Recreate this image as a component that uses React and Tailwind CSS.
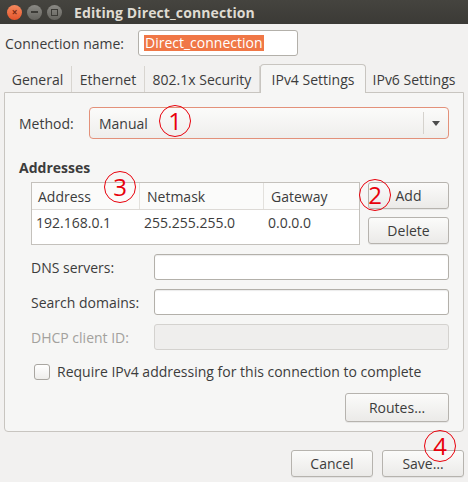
import React from 'react';

const font = { fontFamily: '"Open Sans", "DejaVu Sans", sans-serif' };

// --- red annotation circle drawn over the dialog ---
const Mark = ({ n, className }) => (
  <div className={`absolute w-[32px] h-[32px] rounded-full border-[1.5px] border-[#e8000b] flex items-center justify-center text-[#e8000b] text-[24px] leading-none pointer-events-none ${className}`}>
    {n}
  </div>
);

const Button = ({ children, className = '' }) => (
  <div className={`flex items-center justify-center h-[27px] rounded-[3px] border border-[#b6b3ae] bg-gradient-to-b from-[#fbfbfa] to-[#ebeae8] text-[#3c3c3c] text-[14px] shadow-[0_1px_0_rgba(0,0,0,0.06)] ${className}`}>
    {children}
  </div>
);

const Field = ({ disabled = false }) => (
  <div className={`flex-1 h-[26px] rounded-[3px] border ${disabled ? 'border-[#d4d2cf] bg-[#efeeed]' : 'border-[#b3b0aa] bg-white shadow-[inset_0_1px_1px_rgba(0,0,0,0.08)]'}`} />
);

const Tab = ({ label, active = false, className = '' }) => (
  <div
    className={`flex items-center justify-center text-[14px] ${active
      ? 'h-[29px] bg-[#f6f6f5] border border-b-0 border-[#c8c5c0] rounded-t-[4px] text-[#3c3c3c] -mb-px z-10'
      : 'h-[26px] border-r border-[#d8d5d0] text-[#3c3c3c]'} ${className}`}
  >
    {label}
  </div>
);

export default function App() {
  return (
    <div style={font} className="w-[468px] h-[482px] bg-[#f2f1f0] flex flex-col relative overflow-hidden text-[#3c3c3c]">
      {/* title bar */}
      <div className="h-[24px] bg-gradient-to-b from-[#45443f] to-[#3b3a36] flex items-center pl-[7px]">
        <div className="flex gap-[5px]">
          <div className="w-[15px] h-[15px] rounded-full bg-gradient-to-b from-[#f58a5e] to-[#e4532a] flex items-center justify-center text-[#7a2a14] text-[10px] font-bold leading-none">×</div>
          <div className="w-[15px] h-[15px] rounded-full bg-gradient-to-b from-[#8b8a85] to-[#64635e] flex items-center justify-center">
            <div className="w-[7px] h-[2px] bg-[#3c3b37]" />
          </div>
          <div className="w-[15px] h-[15px] rounded-full bg-gradient-to-b from-[#8b8a85] to-[#64635e] flex items-center justify-center">
            <div className="w-[7px] h-[7px] border-[1.5px] border-[#3c3b37]" />
          </div>
        </div>
        <div className="ml-[12px] text-[#dfdbd2] text-[14px] font-bold tracking-[0.1px]">Editing Direct_connection</div>
      </div>

      {/* connection name */}
      <div className="flex items-center mt-[6px] px-[5px]">
        <div className="w-[133px] text-[14px]">Connection name:</div>
        <div className="w-[160px] h-[26px] rounded-[3px] border border-[#b3b0aa] bg-white flex items-center px-[5px]">
          <span className="bg-[#f07746] text-white text-[14px] leading-[16px] px-px">Direct_connection</span>
        </div>
      </div>

      {/* tabs */}
      <div className="flex items-end mt-[8px] px-[4px]">
        <Tab label="General" className="w-[68px]" />
        <Tab label="Ethernet" className="w-[73px]" />
        <Tab label="802.1x Security" className="w-[115px]" />
        <Tab label="IPv4 Settings" active className="w-[106px]" />
        <Tab label="IPv6 Settings" className="w-[96px] border-r-0" />
      </div>

      {/* panel */}
      <div className="mx-[4px] h-[340px] border border-[#c8c5c0] rounded-b-[4px] bg-[#f6f6f5] flex flex-col px-[14px] pt-[14px]">
        <div className="flex items-center">
          <div className="w-[70px] text-[14px]">Method:</div>
          <div className="flex-1 h-[32px] rounded-[4px] border border-[#e3917a] bg-gradient-to-b from-[#fbfbfa] to-[#efeeec] flex items-center pl-[9px]">
            <span className="flex-1 text-[14px]">Manual</span>
            <div className="w-px h-[22px] bg-[#d5d2cd]" />
            <svg width="24" height="10" viewBox="0 0 24 10"><path d="M8 3h8l-4 5z" fill="#4c4c4c" /></svg>
          </div>
        </div>

        <div className="mt-[18px] text-[14px] font-bold">Addresses</div>

        <div className="flex mt-[4px] pl-[12px]">
          <div className="w-[329px] h-[63px] border border-[#c4c1bc] bg-white flex flex-col text-[14px]">
            <div className="flex h-[27px] border-b border-[#dddad6] items-center bg-[#fbfbfa]">
              <div className="w-[108px] pl-[6px] border-r border-[#e3e1dd] h-full flex items-center">Address</div>
              <div className="w-[124px] pl-[7px] border-r border-[#e3e1dd] h-full flex items-center">Netmask</div>
              <div className="flex-1 pl-[7px] h-full flex items-center">Gateway</div>
            </div>
            <div className="flex h-[24px] items-center">
              <div className="w-[108px] pl-[4px]">192.168.0.1</div>
              <div className="w-[124px] pl-[4px]">255.255.255.0</div>
              <div className="flex-1 pl-[4px]">0.0.0.0</div>
            </div>
          </div>
          <div className="ml-[8px] flex-1 flex flex-col gap-[8px]">
            <Button>Add</Button>
            <Button>Delete</Button>
          </div>
        </div>

        <div className="flex flex-col gap-[9px] mt-[9px] pl-[12px]">
          <div className="flex items-center">
            <div className="w-[123px] text-[14px]">DNS servers:</div>
            <Field />
          </div>
          <div className="flex items-center">
            <div className="w-[123px] text-[14px]">Search domains:</div>
            <Field />
          </div>
          <div className="flex items-center">
            <div className="w-[123px] text-[14px] text-[#a3a19d]">DHCP client ID:</div>
            <Field disabled />
          </div>
        </div>

        <div className="flex items-center mt-[11px] pl-[15px]">
          <div className="w-[16px] h-[16px] rounded-[3px] border border-[#a9a6a1] bg-gradient-to-b from-white to-[#eeedeb]" />
          <span className="ml-[7px] text-[14px]">Require IPv4 addressing for this connection to complete</span>
        </div>

        <div className="flex justify-end mt-[11px]">
          <Button className="w-[104px] h-[29px]">Routes…</Button>
        </div>
      </div>

      {/* dialog buttons */}
      <div className="flex justify-end gap-[9px] mt-[18px] pr-[4px]">
        <Button className="w-[82px]">Cancel</Button>
        <Button className="w-[82px]">Save…</Button>
      </div>

      <Mark n="1" className="left-[159px] top-[105px]" />
      <Mark n="3" className="left-[104px] top-[171px]" />
      <Mark n="2" className="left-[359px] top-[179px]" />
      <Mark n="4" className="left-[424px] top-[430px]" />
    </div>
  );
}
